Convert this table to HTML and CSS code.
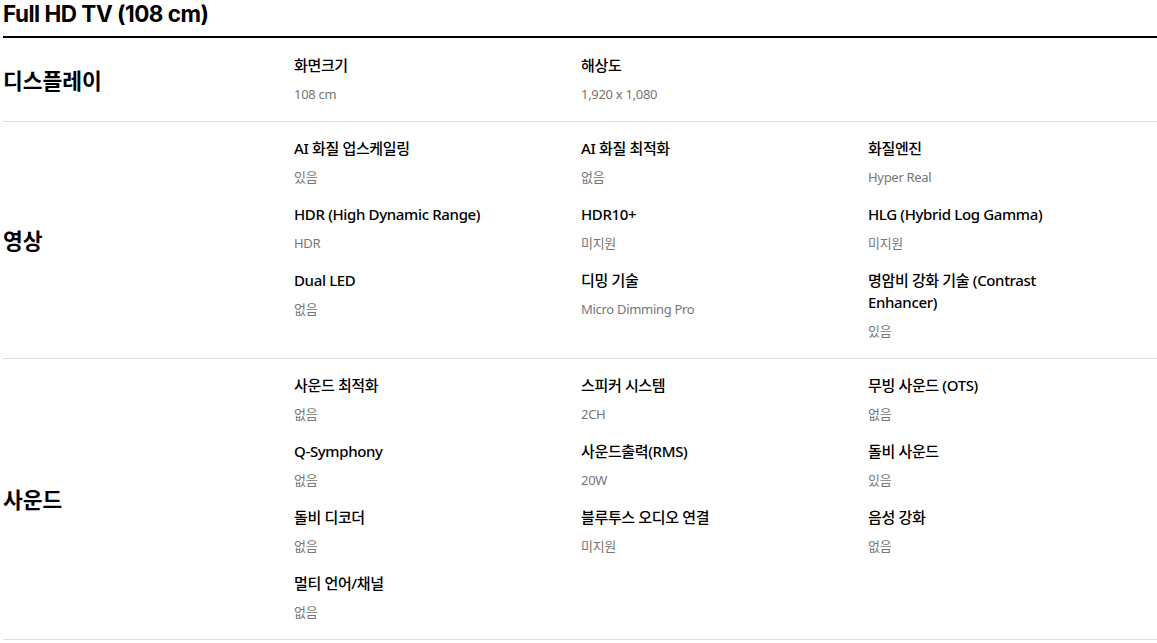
FILE: index.html
```html
<!DOCTYPE html>
<html lang="ko">
<head>
  <meta charset="UTF-8" />
  <meta name="viewport" content="width=device-width, initial-scale=1.0"/>
  <title>Full HD TV (108 cm) 사양</title>
  <link rel="stylesheet" href="styles.css">
</head>
<body>

  <div class="spec">
    <h1 class="spec-title">Full HD TV (108 cm)</h1>

    <!-- 디스플레이 -->
    <div class="spec-group">
      <h2 class="spec-group-name">디스플레이</h2>
      <ul class="spec-list">
        <li class="spec-item"><p class="spec-name">화면크기</p><p class="spec-value">108 cm</p></li>
        <li class="spec-item"><p class="spec-name">해상도</p><p class="spec-value">1,920 x 1,080</p></li>
      </ul>
    </div>

    <!-- 영상 -->
    <div class="spec-group">
      <h2 class="spec-group-name">영상</h2>
      <ul class="spec-list">
        <li class="spec-item"><p class="spec-name">AI 화질 업스케일링</p><p class="spec-value">있음</p></li>
        <li class="spec-item"><p class="spec-name">AI 화질 최적화</p><p class="spec-value">없음</p></li>
        <li class="spec-item"><p class="spec-name">화질엔진</p><p class="spec-value">Hyper Real</p></li>
        <li class="spec-item"><p class="spec-name">HDR (High Dynamic Range)</p><p class="spec-value">HDR</p></li>
        <li class="spec-item"><p class="spec-name">HDR10+</p><p class="spec-value">미지원</p></li>
        <li class="spec-item"><p class="spec-name">HLG (Hybrid Log Gamma)</p><p class="spec-value">미지원</p></li>
        <li class="spec-item"><p class="spec-name">Dual LED</p><p class="spec-value">없음</p></li>
        <li class="spec-item"><p class="spec-name">디밍 기술</p><p class="spec-value">Micro Dimming Pro</p></li>
        <li class="spec-item"><p class="spec-name">명암비 강화 기술 (Contrast Enhancer)</p><p class="spec-value">있음</p></li>
      </ul>
    </div>

    <!-- 사운드 -->
    <div class="spec-group">
      <h2 class="spec-group-name">사운드</h2>
      <ul class="spec-list">
        <li class="spec-item"><p class="spec-name">사운드 최적화</p><p class="spec-value">없음</p></li>
        <li class="spec-item"><p class="spec-name">스피커 시스템</p><p class="spec-value">2CH</p></li>
        <li class="spec-item"><p class="spec-name">무빙 사운드 (OTS)</p><p class="spec-value">없음</p></li>
        <li class="spec-item"><p class="spec-name">Q-Symphony</p><p class="spec-value">없음</p></li>
        <li class="spec-item"><p class="spec-name">사운드출력(RMS)</p><p class="spec-value">20W</p></li>
        <li class="spec-item"><p class="spec-name">돌비 사운드</p><p class="spec-value">있음</p></li>
        <li class="spec-item"><p class="spec-name">돌비 디코더</p><p class="spec-value">없음</p></li>
        <li class="spec-item"><p class="spec-name">블루투스 오디오 연결</p><p class="spec-value">미지원</p></li>
        <li class="spec-item"><p class="spec-name">음성 강화</p><p class="spec-value">없음</p></li>
        <li class="spec-item"><p class="spec-name">멀티 언어/채널</p><p class="spec-value">없음</p></li>
      </ul>
    </div>
  </div>

</body>
</html>
```

FILE: styles.css
```css
body {
  margin: 0;
  padding: 0 0 0 3px;
  background: #fff;
  color: #000;
  font-family: "Noto Sans", "Noto Sans CJK KR", sans-serif;
}

.spec-title {
  margin: 0;
  padding-bottom: 8px;
  border-bottom: 2px solid #000;
  font-family: Inter, "Noto Sans CJK KR", sans-serif;
  font-size: 22.5px;
  line-height: 28px;
  font-weight: 700;
  letter-spacing: -0.5px;
}

.spec-group {
  display: grid;
  grid-template-columns: 291px 1fr;
  align-items: center;
  padding: 15px 0 16px;
  border-bottom: 1px solid #ddd;
}

.spec-title + .spec-group {
  padding-top: 16px;
}

.spec-group-name {
  margin: 0;
  font-family: "Noto Sans CJK KR", sans-serif;
  font-size: 21.5px;
  font-weight: 700;
  line-height: 28px;
}

.spec-list {
  display: grid;
  grid-template-columns: repeat(3, 287px);
  row-gap: 15px;
  margin: 0;
  padding: 0;
  list-style: none;
  align-self: start;
}

.spec-item {
  padding-right: 60px;
}

.spec-name {
  margin: 0 0 7px;
  font-size: 15px;
  line-height: 22px;
  font-weight: 500;
  letter-spacing: -0.35px;
  color: #000;
}

.spec-value {
  margin: 0;
  font-size: 13px;
  line-height: 22px;
  letter-spacing: -0.3px;
  color: #767676;
}
```
